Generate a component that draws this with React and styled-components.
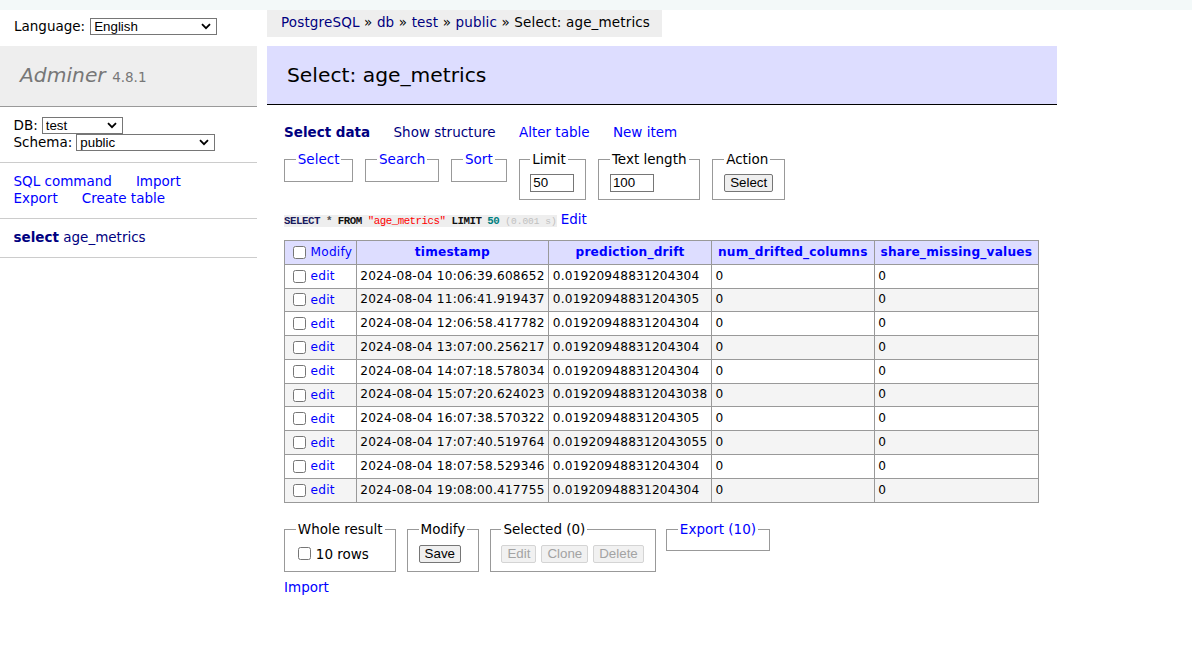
import { styled, createGlobalStyle } from 'styled-components';

const Global = createGlobalStyle`
  html, body {
    margin: 0;
    background: #fff;
  }
  body {
    font: 13.5px/1.25 "DejaVu Sans", Verdana, sans-serif;
    color: #000;
  }
`;

const TopBand = styled.div`
  height: 10px;
  background: #f3f9f9;
`;

const Layout = styled.div`
  display: flex;
  align-items: flex-start;
`;

const Sidebar = styled.div`
  width: 257px;
  flex-shrink: 0;
`;

const LangBar = styled.div`
  height: 24px;
  padding: 4px 14px 8px;
  display: flex;
  align-items: center;
  gap: 5px;
`;

const Logo = styled.h1`
  margin: 0;
  padding: 17px 20px 16px;
  font-size: 20.25px;
  line-height: 25px;
  font-weight: normal;
  font-style: italic;
  color: #777;
  background: #eee;
  border-bottom: 1px solid #999;

  span {
    font-style: normal;
    font-size: 13.5px;
  }
`;

const MenuBlock = styled.div`
  padding: 10.3px 13.5px 10.8px;
  border-bottom: 1px solid #ccc;
  line-height: 16.9px;
`;

const FormLine = styled.div`
  display: flex;
  align-items: center;
  gap: 4px;
  height: 17px;
`;

const LinkRow = styled.div`
  display: flex;
  gap: 24px;
`;

const A = styled.a`
  color: ${(p) => (p.$visited ? 'navy' : 'blue')};
  font-weight: ${(p) => (p.$bold ? 'bold' : 'normal')};
  text-decoration: none;
  white-space: nowrap;
`;

const SelectWrap = styled.span`
  position: relative;
  display: inline-flex;
`;

const NativeSelect = styled.select`
  appearance: none;
  box-sizing: border-box;
  width: ${(p) => p.$w}px;
  height: 17px;
  padding: 0 0 0 3px;
  border: 1px solid #767676;
  border-radius: 0;
  background: #fff;
  color: #000;
  font: 13.33px "Liberation Sans", Arial, sans-serif;
`;

const Chevron = styled.svg`
  position: absolute;
  right: 6px;
  top: 5px;
  pointer-events: none;
`;

function SelectBox({ width, value }) {
  return (
    <SelectWrap>
      <NativeSelect $w={width} defaultValue={value}>
        <option>{value}</option>
      </NativeSelect>
      <Chevron width="10" height="7" viewBox="0 0 10 7">
        <path d="M1 1.2 L5 5.2 L9 1.2" fill="none" stroke="#000" strokeWidth="1.8" />
      </Chevron>
    </SelectWrap>
  );
}

const Main = styled.div`
  margin-left: 27px;
  display: flex;
  flex-direction: column;
  align-items: flex-start;
`;

const Crumb = styled.div`
  height: 27px;
  line-height: 24.3px;
  padding: 0 12px 0 14px;
  margin-left: -17px;
  background: #eee;
  white-space: nowrap;
  letter-spacing: 0.15px;
`;

const Title = styled.h2`
  align-self: stretch;
  margin: 9px -18px 20px -17px;
  padding: 17px 20px 16px;
  font-size: 20.25px;
  line-height: 25px;
  font-weight: normal;
  background: #ddf;
  border-bottom: 1px solid #000;
`;

const NavLinks = styled.div`
  display: flex;
  gap: 23.4px;
  line-height: 16.9px;
  margin-top: -1px;
`;

const FieldRow = styled.div`
  display: flex;
  align-items: flex-start;
  gap: ${(p) => p.$gap || 11}px;
  margin-top: ${(p) => p.$top || 0}px;
`;

const Fieldset = styled.fieldset`
  margin: 0;
  padding: 6px 10.8px 6.75px;
  border: 1px solid #999;
  min-width: 0;
  line-height: 16.9px;

  legend {
    padding: 0 2px;
  }
`;

const FieldBody = styled.div`
  display: flex;
  align-items: center;
  gap: 5px;
  min-height: ${(p) => p.$h || 0}px;
`;

const TextInput = styled.input`
  box-sizing: border-box;
  width: 44px;
  height: 18px;
  padding: 0 2px;
  border: 1px solid #767676;
  font: 13.33px "Liberation Sans", Arial, sans-serif;
`;

const Button = styled.button`
  box-sizing: border-box;
  height: 18px;
  padding: 0 5px;
  font: 13.33px "Liberation Sans", Arial, sans-serif;
  color: ${(p) => (p.disabled ? '#a3a3a3' : '#000')};
  background: ${(p) => (p.disabled ? '#f1f1f1' : '#efefef')};
  border: 1px solid ${(p) => (p.disabled ? '#d4d4d4' : '#767676')};
  border-radius: 2px;
`;

const SqlLine = styled.div`
  margin-top: 11px;
  line-height: 16.9px;
  display: flex;
  align-items: baseline;
  gap: 4px;
`;

const Code = styled.code`
  background: #eee;
  font: 10.8px "Liberation Mono", monospace;
  letter-spacing: -0.5px;
  color: #111;

  b { color: #1a1a5e; }
  .op { color: #555; font-weight: bold; }
  .quo { color: red; }
  .num { color: #007f7f; font-weight: bold; }
  .kw { font-weight: bold; }
`;

const Time = styled.span`
  color: silver;
  font-size: 9.5px;
  letter-spacing: 0;
`;

const Table = styled.table`
  margin-top: 12.5px;
  border-collapse: collapse;
  font-size: 12.15px;
  line-height: 15.2px;
  letter-spacing: 0.2px;

  td, th {
    border: 1px solid #999;
    padding: 2.4px 3.6px;
    white-space: pre;
  }
  thead td, thead th {
    background: #ddf;
  }
  thead th {
    padding: 2.4px 6px;
    text-align: center;
  }
  tbody tr:nth-child(2n) {
    background: #f4f4f4;
  }
  input[type='checkbox'] {
    margin: 2.5px 5px 2.5px 4px;
    vertical-align: middle;
  }
`;

const Footer = styled.div`
  margin-top: 18px;
`;

const CheckLabel = styled.label`
  display: flex;
  align-items: center;
  gap: 3px;
  padding-left: 2px;

  input {
    margin: 0 2px 0 0;
  }
`;

const ImportLink = styled.div`
  margin-top: 7px;
  line-height: 16.9px;
`;

const rows = [
  ['2024-08-04 10:06:39.608652', '0.01920948831204304'],
  ['2024-08-04 11:06:41.919437', '0.01920948831204305'],
  ['2024-08-04 12:06:58.417782', '0.01920948831204304'],
  ['2024-08-04 13:07:00.256217', '0.01920948831204304'],
  ['2024-08-04 14:07:18.578034', '0.01920948831204304'],
  ['2024-08-04 15:07:20.624023', '0.019209488312043038'],
  ['2024-08-04 16:07:38.570322', '0.01920948831204305'],
  ['2024-08-04 17:07:40.519764', '0.019209488312043055'],
  ['2024-08-04 18:07:58.529346', '0.01920948831204304'],
  ['2024-08-04 19:08:00.417755', '0.01920948831204304'],
];

const columns = ['timestamp', 'prediction_drift', 'num_drifted_columns', 'share_missing_values'];

export default function App() {
  return (
    <>
      <Global />
      <TopBand />
      <Layout>
        <Sidebar>
          <LangBar>
            Language: <SelectBox width={127} value="English" />
          </LangBar>
          <Logo>
            Adminer <span>4.8.1</span>
          </Logo>
          <MenuBlock>
            <FormLine>
              DB: <SelectBox width={81} value="test" />
            </FormLine>
            <FormLine>
              Schema: <SelectBox width={139} value="public" />
            </FormLine>
          </MenuBlock>
          <MenuBlock>
            <LinkRow>
              <A href="#">SQL command</A>
              <A href="#">Import</A>
            </LinkRow>
            <LinkRow>
              <A href="#">Export</A>
              <A href="#">Create table</A>
            </LinkRow>
          </MenuBlock>
          <MenuBlock>
            <A href="#" $visited $bold>select</A>{' '}
            <A href="#" $visited>age_metrics</A>
          </MenuBlock>
        </Sidebar>

        <Main>
          <Crumb>
            <A href="#" $visited>PostgreSQL</A> » <A href="#" $visited>db</A> »{' '}
            <A href="#" $visited>test</A> » <A href="#" $visited>public</A> » Select: age_metrics
          </Crumb>
          <Title>Select: age_metrics</Title>

          <NavLinks>
            <A href="#" $visited $bold>Select data</A>
            <A href="#" $visited>Show structure</A>
            <A href="#">Alter table</A>
            <A href="#">New item</A>
          </NavLinks>

          <FieldRow $top={10} $gap={12}>
            <Fieldset>
              <legend><A href="#">Select</A></legend>
            </Fieldset>
            <Fieldset>
              <legend><A href="#">Search</A></legend>
            </Fieldset>
            <Fieldset>
              <legend><A href="#">Sort</A></legend>
            </Fieldset>
            <Fieldset>
              <legend>Limit</legend>
              <FieldBody>
                <TextInput defaultValue="50" />
              </FieldBody>
            </Fieldset>
            <Fieldset>
              <legend>Text length</legend>
              <FieldBody>
                <TextInput defaultValue="100" />
              </FieldBody>
            </Fieldset>
            <Fieldset>
              <legend>Action</legend>
              <FieldBody>
                <Button>Select</Button>
              </FieldBody>
            </Fieldset>
          </FieldRow>

          <SqlLine>
            <Code>
              <b className="kw">SELECT</b> <span className="op">*</span> <span className="kw">FROM</span>{' '}
              <span className="quo">"age_metrics"</span> <span className="kw">LIMIT</span>{' '}
              <span className="num">50</span> <Time>(0.001 s)</Time>
            </Code>
            <A href="#">Edit</A>
          </SqlLine>

          <Table>
            <thead>
              <tr>
                <td>
                  <input type="checkbox" />
                  <A href="#">Modify</A>
                </td>
                {columns.map((c) => (
                  <th key={c}>
                    <A href="#" $bold>{c}</A>
                  </th>
                ))}
              </tr>
            </thead>
            <tbody>
              {rows.map(([ts, drift]) => (
                <tr key={ts}>
                  <td>
                    <input type="checkbox" />
                    <A href="#">edit</A>
                  </td>
                  <td>{ts}</td>
                  <td>{drift}</td>
                  <td>0</td>
                  <td>0</td>
                </tr>
              ))}
            </tbody>
          </Table>

          <Footer>
            <FieldRow $gap={10.5}>
              <Fieldset>
                <legend>Whole result</legend>
                <FieldBody $h={21}>
                  <CheckLabel>
                    <input type="checkbox" /> 10 rows
                  </CheckLabel>
                </FieldBody>
              </Fieldset>
              <Fieldset>
                <legend>Modify</legend>
                <FieldBody $h={21}>
                  <Button>Save</Button>
                </FieldBody>
              </Fieldset>
              <Fieldset>
                <legend>Selected (0)</legend>
                <FieldBody $h={21}>
                  <Button disabled>Edit</Button>
                  <Button disabled>Clone</Button>
                  <Button disabled>Delete</Button>
                </FieldBody>
              </Fieldset>
              <Fieldset>
                <legend><A href="#">Export (10)</A></legend>
              </Fieldset>
            </FieldRow>
          </Footer>

          <ImportLink>
            <A href="#">Import</A>
          </ImportLink>
        </Main>
      </Layout>
    </>
  );
}
